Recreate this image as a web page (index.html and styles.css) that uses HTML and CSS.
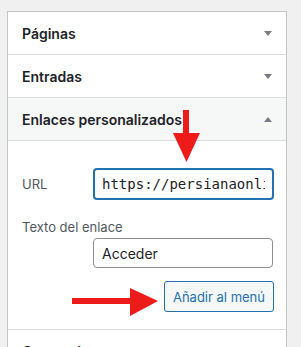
FILE: index.html
```html
<!DOCTYPE html>
<html lang="es">
<head>
    <meta charset="UTF-8">
    <meta name="viewport" content="width=device-width, initial-scale=1.0">
    <title>Menú</title>
    <link rel="stylesheet" href="styles.css">
</head>
<body>
    <div class="menu-panel">
        <div class="section-header">
            <span>Páginas</span>
            <span class="toggle down"></span>
        </div>
        <div class="section-header">
            <span>Entradas</span>
            <span class="toggle down"></span>
        </div>
        <div class="section-header open">
            <span>Enlaces personalizados</span>
            <span class="toggle up"></span>
        </div>
        <div class="section-body">
            <div class="url-row">
                <label class="field-label" for="custom-url">URL</label>
                <input type="text" class="url-input" id="custom-url" value="https://persianaonline.com/mi-cuenta/">
            </div>
            <label class="field-label link-label" for="custom-text">Texto del enlace</label>
            <input type="text" class="text-input" id="custom-text" value="Acceder">
            <div class="actions">
                <button class="add-btn">Añadir al menú</button>
            </div>
        </div>
        <div class="section-header">
            <span>Categorías</span>
            <span class="toggle down"></span>
        </div>
    </div>

    <!-- flechas rojas de la captura -->
    <svg class="marks" width="301" height="347" viewBox="0 0 301 347">
        <rect x="183" y="110" width="6" height="25" fill="#ee1b1b"/>
        <polygon points="173,133 200,133 186.5,162" fill="#ee1b1b"/>
        <rect x="72" y="298" width="60" height="6" fill="#ee1b1b"/>
        <polygon points="130,288 130,316 158,301" fill="#ee1b1b"/>
    </svg>
</body>
</html>
```

FILE: styles.css
```css
:root {
    --border: #c3c4c7;
    --divider: #dcdcde;
    --text: #1d2327;
    --muted: #50575e;
    --blue: #2271b1;
    --gray-bg: #f6f7f7;
}

* {
    margin: 0;
    padding: 0;
    box-sizing: border-box;
}

body {
    font-family: Inter, "Noto Sans", sans-serif;
    background-color: #f0f0f1;
    color: var(--text);
    height: 347px;
    overflow: hidden;
    position: relative;
}

.menu-panel {
    margin: 11px 0 0 7px;
    width: 280px;
    background: #ffffff;
    border: 1px solid var(--border);
    border-bottom: none;
}

.section-header {
    height: 43px;
    display: flex;
    align-items: center;
    justify-content: space-between;
    padding: 1px 14px 0 14px;
    border-bottom: 1px solid var(--divider);
    font-size: 14px;
    font-weight: 600;
}

.section-header.open {
    background: var(--gray-bg);
}

.toggle {
    width: 0;
    height: 0;
    border-left: 4px solid transparent;
    border-right: 4px solid transparent;
}

.toggle.down {
    border-top: 5px solid #787c82;
}

.toggle.up {
    border-bottom: 5px solid #787c82;
}

.section-body {
    padding: 27px 12px 17px 14px;
    border-bottom: 1px solid var(--divider);
}

.url-row {
    display: flex;
    align-items: center;
}

.field-label {
    font-size: 13px;
    color: var(--muted);
    flex: 1;
}

.url-input {
    width: 181px;
    height: 32px;
    border: 2px solid var(--blue);
    border-radius: 4px;
    padding: 0 7px;
    font-family: "DejaVu Sans Mono", monospace;
    font-size: 14px;
    color: var(--text);
    outline: none;
}

.link-label {
    display: block;
    margin-top: 18px;
    line-height: 18px;
}

.text-input {
    display: block;
    margin: 2px 1px 0 auto;
    width: 180px;
    height: 30px;
    border: 1px solid #8c8f94;
    border-radius: 4px;
    padding: 0 8px;
    font-family: inherit;
    font-size: 14px;
    color: var(--text);
    outline: none;
}

.actions {
    display: flex;
    justify-content: flex-end;
    margin-top: 13px;
}

.add-btn {
    height: 31px;
    padding: 0 8px;
    border: 1px solid var(--blue);
    border-radius: 3px;
    background: var(--gray-bg);
    color: var(--blue);
    font-family: inherit;
    font-size: 13px;
}

.marks {
    position: absolute;
    top: 0;
    left: 0;
    pointer-events: none;
}
```
